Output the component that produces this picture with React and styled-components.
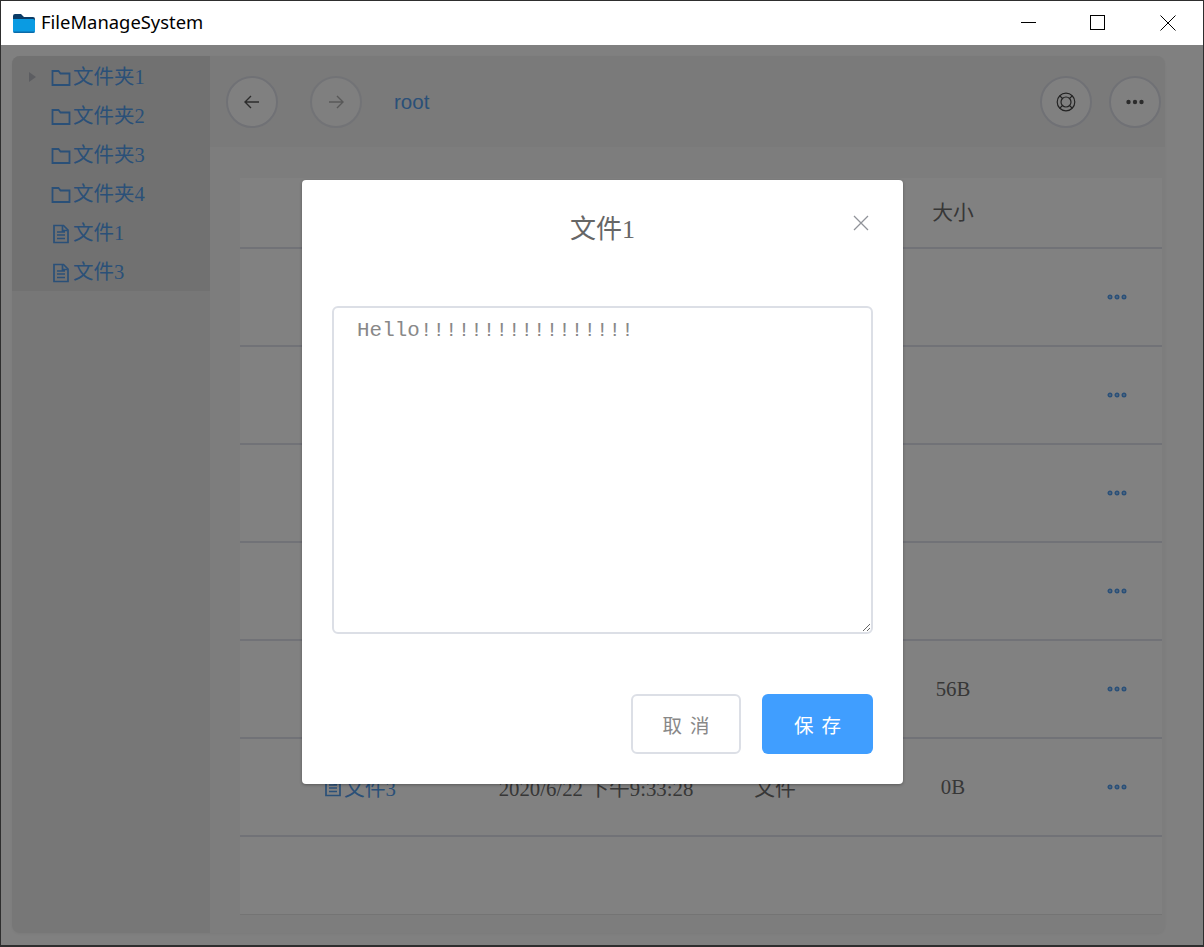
import React from "react";
import styled, { createGlobalStyle } from "styled-components";

const Global = createGlobalStyle`
  html, body { margin: 0; padding: 0; background: #2e2e2e; overflow: hidden; }
  * { box-sizing: border-box; }
`;
const serif = `"Liberation Serif", "Noto Sans CJK SC", serif`;
const Frame = styled.div`
  width: 1204px; height: 947px; padding: 1px 1px 2px;
  display: flex; flex-direction: column; background: #2e2e2e;
`;
const TitleBar = styled.header`
  height: 44px; flex: none; background: #fff; display: flex; align-items: center;
  padding-left: 12px; color: #000;
`;
const AppName = styled.span`
  font: 18.4px/44px "Noto Sans", "Open Sans", sans-serif; margin-left: 6px; flex: 1; margin-top: -3px;
`;
const WinButtons = styled.div`display: flex;`;
const WinButton = styled.div`
  width: 70px; height: 44px; display: flex; align-items: center; justify-content: center;
  svg { display: block; margin-top: -1px; margin-right: ${p => p.$shift || 0}px; }
`;
const Desk = styled.div`
  flex: 1; min-height: 0; position: relative; background: #f6f6f6; padding: 11px 38px 12px 11px;
  display: flex;
`;
const Panel = styled.div`
  flex: 1; display: flex; border-radius: 8px; overflow: hidden; background: #f0f0f0;
  box-shadow: 0 1px 3px rgba(0,0,0,.06);
`;
const Sidebar = styled.aside`width: 198px; flex: none; background: #e4e4e4;`;
const Tree = styled.ul`margin: 0; padding: 2px 0 0; list-style: none; background: #d9d9d9; height: 235px;`;
const TreeRow = styled.li`
  height: 39px; display: flex; align-items: center; padding-left: 39px; position: relative;
  color: #5199e6; font: 20.5px/39px ${serif};
  svg { margin-right: 2px; flex: none; }
`;
const Caret = styled.i`
  position: absolute; left: 17px; top: 14px; width: 0; height: 0;
  border-left: 7px solid #b0b3bb; border-top: 5px solid transparent; border-bottom: 5px solid transparent;
`;
const Main = styled.main`flex: 1; display: flex; flex-direction: column; min-width: 0;`;
const Toolbar = styled.div`
  height: 91px; flex: none; background: #eaeaea; display: flex; align-items: center; padding: 1px 4px 0 16px;
`;
const Round = styled.button`
  width: 52px; height: 52px; border-radius: 50%; padding: 0; flex: none;
  border: 2px solid #d6d8e1; background: #f6f6f6; display: flex; align-items: center; justify-content: center;
  color: #555; margin-right: ${p => p.$mr || 0}px; opacity: ${p => p.$off ? .75 : 1};
`;
const Crumb = styled.span`
  flex: 1; color: #5199e6; font: 20.5px "Liberation Sans", sans-serif; margin-left: 32px;
`;
const Content = styled.div`flex: 1; background: #f0f0f0; padding: 31px 3px 18px 30px; min-height: 0;`;
const Table = styled.div`height: 100%; background: #f8f8f8; border-bottom: 1px solid #dedede;`;
const Row = styled.div`
  display: grid; grid-template-columns: 236px 240px 118px 238px 90px; align-items: center;
  height: ${p => p.$h}px; border-bottom: 2px solid #d9dae4; padding-bottom: ${p => p.$pb || 0}px;
  color: #6a6a6a; font: 20.8px ${serif};
`;
const NameCell = styled.div`
  padding-left: 83px; color: #5199e6; display: flex; align-items: center; white-space: nowrap;
  svg { margin-right: 1px; }
`;
const Cell = styled.div`text-align: center; white-space: nowrap;`;
const Dots = styled.div`display: flex; justify-content: center; svg { display: block; }`;

const Overlay = styled.div`
  position: absolute; inset: 0; background: rgba(0,0,0,.48);
  display: flex; justify-content: center; padding-top: 135px;
`;
const Modal = styled.section`
  width: 601px; height: 604px; background: #fff; border-radius: 4px; position: relative;
  box-shadow: 0 1px 3px rgba(0,0,0,.3); padding: 32px 30px 30px;
  display: flex; flex-direction: column; margin-left: 1px;
`;
const ModalTitle = styled.h2`
  margin: 0; font: normal 26px/36px ${serif}; text-align: center; color: #666;
`;
const CloseBtn = styled.button`
  position: absolute; right: 33px; top: 34px; width: 18px; height: 18px; padding: 0; border: 0; background: none;
  color: #909399; svg { display: block; }
`;
const Editor = styled.textarea`
  display: block; width: 541px; height: 328px; margin-top: 58px; padding: 11px 23px; flex: none;
  border: 2px solid #dcdfe6; border-radius: 6px; outline: none; resize: vertical; letter-spacing: .1px;
  font: 20.8px/24px "Liberation Mono", monospace; color: #888; background: #fff;
`;
const ModalFooter = styled.footer`display: flex; justify-content: flex-end; gap: 21px; margin-top: 60px;`;
const ModalBtn = styled.button`
  width: ${p => p.$w}px; height: 60px; border-radius: 6px; padding: 0 0 0 8px;
  font: 19.5px "Noto Sans CJK SC", sans-serif; letter-spacing: 8px;
  border: ${p => p.$primary ? "0" : "2px solid #dcdfe6"};
  background: ${p => p.$primary ? "#409eff" : "#fff"};
  color: ${p => p.$primary ? "#fff" : "#888"};
`;

const FolderIcon = () => (
  <svg width="20" height="20" viewBox="0 0 20 20" fill="none" stroke="currentColor" strokeWidth="1.8">
    <path d="M1.500 3h6l2 2.500h9V17h-17z" />
  </svg>
);
const DocIcon = () => (
  <svg width="20" height="20" viewBox="0 0 20 20" fill="none" stroke="currentColor" strokeWidth="1.7">
    <path d="M3 1.500h9.500l4.500 4.500v12.500h-14z" />
    <path d="M6 8h8M6 11h8M6 14.500h8M11.500 2v4.500h5" />
  </svg>
);
const DotsIcon = () => (
  <svg width="20" height="6" viewBox="0 0 20 6" fill="none" stroke="#5199e6" strokeWidth="1.800">
    <circle cx="3" cy="3" r="1.600" /><circle cx="10" cy="3" r="1.600" /><circle cx="17" cy="3" r="1.600" />
  </svg>
);

const tree = [
  ["文件夹1", 1, 1], ["文件夹2", 1], ["文件夹3", 1], ["文件夹4", 1], ["文件1", 0], ["文件3", 0],
];
const rows = [
  ["文件夹1", 1, "2020/6/22 下午9:33:28", "文件夹", ""],
  ["文件夹2", 1, "2020/6/22 下午9:33:28", "文件夹", ""],
  ["文件夹3", 1, "2020/6/22 下午9:33:28", "文件夹", ""],
  ["文件夹4", 1, "2020/6/22 下午9:33:28", "文件夹", ""],
  ["文件1", 0, "2020/6/22 下午9:33:28", "文件", "56B"],
  ["文件3", 0, "2020/6/22 下午9:33:28", "文件", "0B"],
];

export default function App() {
  return (
    <Frame>
      <Global />
      <TitleBar>
        <svg width="22" height="19" viewBox="0 0 22 19">
          <path d="M0 2q0-2 2-2h6l3 3h9q2 0 2 2v2H0z" fill="#0b3c66" />
          <path d="M0 5h20q2 0 2 2v10q0 2-2 2H2q-2 0-2-2z" fill="#0a9be2" />
          <path d="M0 17.500h22V17q0 2-2 2H2q-2 0-2-2z" fill="#0b6aa8" />
        </svg>
        <AppName>FileManageSystem</AppName>
        <WinButtons>
          <WinButton><svg width="15" height="15"><path d="M0 7.500h15" stroke="#000" /></svg></WinButton>
          <WinButton $shift={1}><svg width="15" height="15"><rect x=".5" y=".5" width="14" height="14" fill="none" stroke="#000" /></svg></WinButton>
          <WinButton><svg width="16" height="16"><path d="M.5.500l15 15M15.500.500l-15 15" stroke="#000" /></svg></WinButton>
        </WinButtons>
      </TitleBar>
      <Desk>
        <Panel>
          <Sidebar>
            <Tree>
              {tree.map(([name, folder, caret]) => (
                <TreeRow key={name}>
                  {caret ? <Caret /> : null}
                  {folder ? <FolderIcon /> : <DocIcon />}
                  {name}
                </TreeRow>
              ))}
            </Tree>
          </Sidebar>
          <Main>
            <Toolbar>
              <Round $mr={32}>
                <svg width="18" height="18" viewBox="0 0 18 18" fill="none" stroke="currentColor" strokeWidth="1.400"><path d="M16 9H2M8 3L2 9l6 6" /></svg>
              </Round>
              <Round $off>
                <svg width="18" height="18" viewBox="0 0 18 18" fill="none" stroke="currentColor" strokeWidth="1.400" opacity=".6"><path d="M2 9h14M10 3l6 6-6 6" /></svg>
              </Round>
              <Crumb>root</Crumb>
              <Round $mr={17}>
                <svg width="20" height="20" viewBox="0 0 20 20" fill="none" stroke="#444" strokeWidth="1.200">
                  <circle cx="10" cy="10" r="8.800" /><circle cx="10" cy="10" r="5" />
                  <path d="M3.800 3.800l2.700 2.700M16.200 3.800l-2.700 2.700M3.800 16.200l2.700-2.700M16.200 16.200l-2.700-2.700" />
                </svg>
              </Round>
              <Round>
                <svg width="18" height="6" viewBox="0 0 18 6" fill="#555"><circle cx="2.500" cy="3" r="2.200" /><circle cx="9" cy="3" r="2.200" /><circle cx="15.500" cy="3" r="2.200" /></svg>
              </Round>
            </Toolbar>
            <Content>
              <Table>
                <Row $h={71} $pb={4}>
                  <Cell>名称</Cell><Cell>修改时间</Cell><Cell>类型</Cell><Cell>大小</Cell><Cell />
                </Row>
                {rows.map(([name, folder, time, type, size]) => (
                  <Row key={name} $h={98}>
                    <NameCell>{folder ? <FolderIcon /> : <DocIcon />}{name}</NameCell>
                    <Cell>{time}</Cell>
                    <Cell>{type}</Cell>
                    <Cell>{size}</Cell>
                    <Dots><DotsIcon /></Dots>
                  </Row>
                ))}
              </Table>
            </Content>
          </Main>
        </Panel>
        <Overlay>
          <Modal>
            <ModalTitle>文件1</ModalTitle>
            <CloseBtn aria-label="关闭">
              <svg width="18" height="18" viewBox="0 0 18 18" stroke="currentColor" strokeWidth="1.300"><path d="M2 2l14 14M16 2L2 16" /></svg>
            </CloseBtn>
            <Editor defaultValue="Hello!!!!!!!!!!!!!!!!!" />
            <ModalFooter>
              <ModalBtn $w={110}>取消</ModalBtn>
              <ModalBtn $w={111} $primary>保存</ModalBtn>
            </ModalFooter>
          </Modal>
        </Overlay>
      </Desk>
    </Frame>
  );
}
